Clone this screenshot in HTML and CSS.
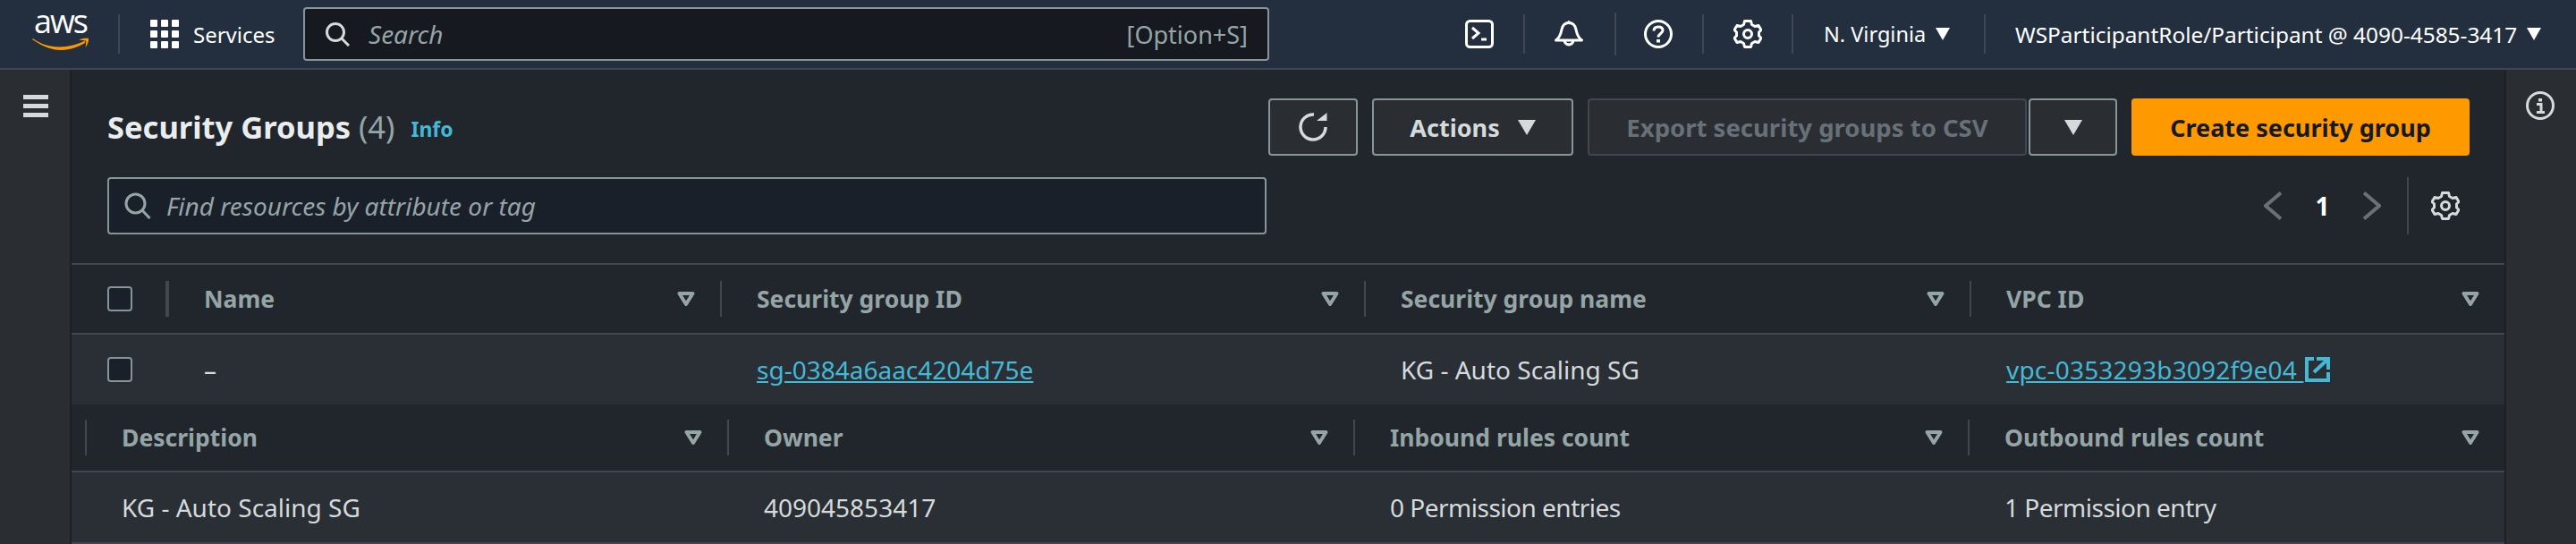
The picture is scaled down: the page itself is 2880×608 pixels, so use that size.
FILE: index.html
```html
<!DOCTYPE html>
<html lang="en">
<head>
<meta charset="UTF-8" />
<title>Security Groups</title>
<link rel="stylesheet" href="styles.css">
</head>
<body>
    <svg class="defs">
        <symbol id="icon-gear" viewBox="0 0 32 32"><path d="M12.5 1.5 H19.5 L20.5 5.5 L24 7.5 L28 6.5 L31 11.5 L28.5 14 V18 L31 20.5 L28 25.5 L24 24.5 L20.5 26.5 L19.5 30.5 H12.5 L11.5 26.5 L8 24.5 L4 25.5 L1 20.5 L3.5 18 V14 L1 11.5 L4 6.5 L8 7.5 L11.5 5.5 Z" fill="none" stroke-width="3" stroke-linejoin="round"/><circle cx="16" cy="16" r="4.5" fill="none" stroke-width="3"/></symbol>
        <symbol id="icon-sort" viewBox="0 0 20 16"><path d="M2.5 2 H17.5 L10 14 Z" fill="none" stroke="#95a5a6" stroke-width="4" stroke-linejoin="round"/></symbol>
    </svg>

    <header class="topnav">
        <div class="logo">
            <span class="logo-word">aws</span>
            <svg class="logo-smile" viewBox="0 0 65 16" width="65" height="16" fill="#f90"><path d="M1 2 C 14 11, 25 14, 33 14 C 44 14, 53 10, 60 6 L 60 3.500 C 52 7.500, 42 10.500, 31 10.500 C 20 10.500, 10 7, 2 1 Z"/><path d="M53 2.500 C 57 0.500, 62 0.500, 64 1 C 64.500 3, 63 8, 60.500 11 C 61 8, 61.500 5, 61 3.500 C 59 3, 56 3, 53 2.500 Z"/></svg>
        </div>
        <span class="nav-sep nav-sep-logo"></span>
        <div class="services">
            <svg class="grid-icon" viewBox="0 0 32 32" width="32" height="32" fill="#fff"><rect x="0" y="0" width="8" height="8" rx="1"/><rect x="12" y="0" width="8" height="8" rx="1"/><rect x="24" y="0" width="8" height="8" rx="1"/><rect x="0" y="12" width="8" height="8" rx="1"/><rect x="12" y="12" width="8" height="8" rx="1"/><rect x="24" y="12" width="8" height="8" rx="1"/><rect x="0" y="24" width="8" height="8" rx="1"/><rect x="12" y="24" width="8" height="8" rx="1"/><rect x="24" y="24" width="8" height="8" rx="1"/></svg>
            <span>Services</span>
        </div>
        <div class="nav-search">
            <svg class="search-icon" viewBox="0 0 28 28" width="28" height="28" fill="none" stroke="#d5dbdb" stroke-width="3"><circle cx="12" cy="12" r="9.5"/><path d="M19 19 L27 27"/></svg>
            <span class="nav-search-text">Search</span>
            <span class="nav-search-key">[Option+S]</span>
        </div>
        <div class="nav-icon nav-icon-first">
            <svg viewBox="0 0 32 32" width="32" height="32" fill="none" stroke="#fff" stroke-width="3"><rect x="1.5" y="1.5" width="29" height="29" rx="4"/><path d="M8 9 L15 15 L8 21"/><path d="M18 22 H24"/></svg>
        </div>
        <span class="nav-sep"></span>
        <div class="nav-icon">
            <svg viewBox="0 0 32 32" width="32" height="32" fill="none" stroke="#fff" stroke-width="3"><path d="M1.5 23 C 6 20, 7 16, 8 11 C 9 6, 12 3.5, 16 3.5 C 20 3.5, 23 6, 24 11 C 25 16, 26 20, 30.5 23 Z" stroke-linejoin="round"/><circle cx="16" cy="2.5" r="1.5" fill="#fff" stroke="none"/><path d="M11 23 A5 5 0 0 0 21 23 M11 24 A5.5 6.5 0 0 0 21 24"/></svg>
        </div>
        <span class="nav-sep nav-sep-tall"></span>
        <div class="nav-icon">
            <svg viewBox="0 0 32 32" width="32" height="32" fill="none" stroke="#fff" stroke-width="3"><circle cx="16" cy="16" r="14.5"/><path d="M11 12.5 C 11 9.5, 13 8, 16 8 C 19 8, 21 9.5, 21 12 C 21 15.5, 16 15.5, 16 19.5"/><rect x="14" y="22" width="4" height="3.5" fill="#fff" stroke="none"/></svg>
        </div>
        <span class="nav-sep"></span>
        <div class="nav-icon">
            <svg width="32" height="32" stroke="#fff"><use href="#icon-gear"/></svg>
        </div>
        <span class="nav-sep"></span>
        <div class="nav-menu nav-menu-region"><span>N. Virginia</span><i class="tri tri-nav"></i></div>
        <span class="nav-sep"></span>
        <div class="nav-menu nav-menu-user"><span>WSParticipantRole/Participant @ 4090-4585-3417</span><i class="tri tri-nav"></i></div>
    </header>

    <div class="layout">
        <aside class="side side-left">
            <div class="burger"><span></span><span></span><span></span></div>
        </aside>

        <main class="main">
            <section class="panel-head">
                <div class="head-row">
                    <h1>Security Groups <span class="count">(4)</span></h1>
                    <a class="info">Info</a>
                    <div class="actions">
                        <button class="btn btn-icon">
                            <svg viewBox="0 0 32 32" width="32" height="32" fill="none" stroke="#d5dbdb" stroke-width="3.5"><path d="M17 2 A14 14 0 1 0 30 16"/><path d="M20 9 H31.500 V0 Z" fill="#d5dbdb" stroke="none"/></svg>
                        </button>
                        <button class="btn btn-actions">Actions<i class="tri tri-btn"></i></button>
                        <button class="btn btn-export" disabled>Export security groups to CSV</button>
                        <button class="btn btn-split"><i class="tri tri-btn"></i></button>
                        <button class="btn btn-create">Create security group</button>
                    </div>
                </div>
                <div class="filter-row">
                    <div class="filter">
                        <svg viewBox="0 0 30 30" width="30" height="30" fill="none" stroke="#95a5a6" stroke-width="3"><circle cx="12.5" cy="12.5" r="10.5"/><path d="M20 20 L28.5 29"/></svg>
                        <span>Find resources by attribute or tag</span>
                    </div>
                    <div class="pager">
                        <svg viewBox="0 0 20 32" width="20" height="32" fill="none" stroke="#687078" stroke-width="4"><path d="M19 1.500 L2 16 L19 30.500"/></svg>
                        <span class="page-num">1</span>
                        <svg viewBox="0 0 20 32" width="20" height="32" fill="none" stroke="#687078" stroke-width="4"><path d="M1 1.500 L18 16 L1 30.500"/></svg>
                        <span class="pager-sep"></span>
                        <svg width="32" height="32" stroke="#d5dbdb"><use href="#icon-gear"/></svg>
                    </div>
                </div>
            </section>

            <section class="table">
                <div class="row row-head cols-a">
                    <div class="cell-check"><span class="checkbox"></span></div>
                    <div class="cell"><b>Name</b><svg class="sort"><use href="#icon-sort"/></svg></div>
                    <div class="cell"><b>Security group ID</b><svg class="sort"><use href="#icon-sort"/></svg></div>
                    <div class="cell"><b>Security group name</b><svg class="sort"><use href="#icon-sort"/></svg></div>
                    <div class="cell"><b>VPC ID</b><svg class="sort"><use href="#icon-sort"/></svg></div>
                </div>
                <div class="row row-data row-first cols-a">
                    <div class="cell-check"><span class="checkbox"></span></div>
                    <div class="cell">–</div>
                    <div class="cell"><a class="link">sg-0384a6aac4204d75e</a></div>
                    <div class="cell">KG - Auto Scaling SG</div>
                    <div class="cell">
                        <a class="link link-ext">vpc-0353293b3092f9e04&nbsp;</a>
                        <svg class="ext" viewBox="0 0 28 28" width="28" height="28" fill="none" stroke="#44b9d6" stroke-width="4"><path d="M10 2 H2 V26 H26 V17"/><path d="M13 2 H26 V14 M25 3 L10 17"/></svg>
                    </div>
                </div>
                <div class="row row-head row-head-second cols-b">
                    <div class="cell"><b>Description</b><svg class="sort"><use href="#icon-sort"/></svg></div>
                    <div class="cell"><b>Owner</b><svg class="sort"><use href="#icon-sort"/></svg></div>
                    <div class="cell"><b>Inbound rules count</b><svg class="sort"><use href="#icon-sort"/></svg></div>
                    <div class="cell"><b>Outbound rules count</b><svg class="sort"><use href="#icon-sort"/></svg></div>
                </div>
                <div class="row row-data cols-b">
                    <div class="cell">KG - Auto Scaling SG</div>
                    <div class="cell">409045853417</div>
                    <div class="cell cell-tight">0 Permission entries</div>
                    <div class="cell cell-tight">1 Permission entry</div>
                </div>
            </section>
        </main>

        <aside class="side side-right">
            <svg viewBox="0 0 32 32" width="32" height="32" fill="none" stroke="#d5dbdb" stroke-width="3"><circle cx="16" cy="16" r="14.500"/><rect x="14" y="8" width="4" height="3.500" fill="#d5dbdb" stroke="none"/><path d="M12 14.500 H17 V23 M12 23.500 H21" stroke-width="3"/></svg>
        </aside>
    </div>
</body>
</html>
```

FILE: styles.css
```css
* {
    margin:0px;
    padding:0px;
    box-sizing:border-box;
}

html, body {
    height:608px;
    overflow:hidden;
}

body {
    font-family:"Noto Sans", "Open Sans", sans-serif;
    font-size:28px;
    color:#d5dbdb;
    background-color:#21252c;
}

.defs {
    display:none;
}

/* top bar */
.topnav {
    display:flex;
    align-items:center;
    height:78px;
    border-bottom:2px solid #414750;
    color:#fff;
    background-color:#232f3e;
}

.logo {
    display:flex;
    flex-direction:column;
    align-items:center;
    width:65px;
    height:39px;
    margin-left:35px;
}

.logo-word {
    height:23px;
    font-family:"Open Sans", sans-serif;
    font-size:36px;
    line-height:10px;
    letter-spacing:-2px;
}

.nav-sep {
    flex:none;
    width:2px;
    height:44px;
    background-color:#414750;
}

.nav-sep-tall {
    height:48px;
    margin:0px -2px 0px 2px;
}

.nav-sep-logo {
    margin-left:32px;
}

.services {
    display:flex;
    flex:none;
    align-items:center;
    gap:16px;
    width:171px;
    margin-left:34px;
    font-size:24px;
}

.nav-search {
    display:flex;
    flex:none;
    align-items:center;
    width:1080px;
    height:60px;
    padding:0px 22px;
    border:2px solid #879596;
    border-radius:4px;
    background-color:#16191f;
}

.nav-search-text {
    margin-left:21px;
    font-style:italic;
    color:#95a5a6;
}

.nav-search-key {
    margin-left:auto;
    font-size:27px;
    color:#95a5a6;
}

.nav-icon {
    display:flex;
    flex:none;
    margin:0px 33px;
}

.nav-icon-first {
    margin-left:219px;
}

.nav-menu {
    display:flex;
    flex:none;
    align-items:center;
    gap:11px;
}

.nav-menu-region {
    width:213px;
    padding-left:34px;
    font-size:23.5px;
}

.nav-menu-user {
    padding-left:33px;
    font-size:24.4px;
}

.tri {
    display:inline-block;
    width:0px;
    height:0px;
    border-style:solid;
    border-color:transparent;
}

.tri-nav {
    border-width:14px 8px 0px 8px;
    border-top-color:#fff;
}

.tri-btn {
    border-width:17px 10px 0px 10px;
    border-top-color:#d5dbdb;
}

/* page frame */
.layout {
    display:flex;
    height:530px;
}

.side {
    flex:none;
    width:80px;
    background-color:#2a2e33;
}

.side-left {
    border-right:2px solid #1d2026;
    padding:28px 0px 0px 26px;
}

.side-right {
    border-left:2px solid #1d2026;
    padding:24px 0px 0px 22px;
}

.side-right svg {
    display:block;
}

.burger {
    display:flex;
    flex-direction:column;
    gap:5px;
    width:28px;
}

.burger span {
    height:5px;
    background-color:#d5dbdb;
}

.main {
    flex:1;
    min-width:0;
}

/* heading and actions */
.panel-head {
    height:218px;
    padding:32px 0px 0px 40px;
    border-bottom:2px solid #414750;
}

.head-row {
    display:flex;
    align-items:center;
    height:64px;
}

h1 {
    font-size:34.5px;
    font-weight:700;
    color:#eaeded;
    line-height:44px;
}

.count {
    font-weight:400;
    color:#95a5a6;
}

.info {
    margin-left:18px;
    margin-top:4px;
    font-size:23px;
    font-weight:700;
    color:#44b9d6;
}

.actions {
    display:flex;
    gap:16px;
    margin-left:auto;
    padding-right:39px;
}

.btn {
    display:flex;
    align-items:center;
    justify-content:center;
    height:64px;
    border:2px solid #879596;
    border-radius:4px;
    font-family:inherit;
    font-size:27px;
    font-weight:700;
    color:#d5dbdb;
    background-color:#2a2e33;
}

.btn-icon {
    width:100px;
}

.btn-actions {
    gap:20px;
    width:225px;
}

.btn-export {
    width:491px;
    margin-right:-14px;
    border-color:#414750;
    font-size:27.5px;
    color:#687078;
}

.btn-split {
    width:99px;
}

.btn-create {
    width:378px;
    border-color:#f90;
    color:#16191f;
    background-color:#f90;
}

.filter-row {
    display:flex;
    align-items:center;
    height:64px;
    margin-top:24px;
}

.filter {
    display:flex;
    align-items:center;
    gap:17px;
    width:1296px;
    height:64px;
    padding-left:17px;
    border:2px solid #879596;
    border-radius:4px;
    font-style:italic;
    color:#95a5a6;
    background-color:#1a2029;
}

.pager {
    display:flex;
    align-items:center;
    height:64px;
    margin-left:auto;
    padding-right:50px;
}

.page-num {
    width:91px;
    text-align:center;
    font-weight:700;
    color:#fff;
}

.pager-sep {
    width:2px;
    height:64px;
    margin:0px 25px 0px 29px;
    background-color:#414750;
}

/* table */
.row {
    display:grid;
    align-items:center;
}

.cols-a {
    grid-template-columns:107px 618px 720px 677px 598px;
}

.cols-b {
    grid-template-columns:15px 718px 700px 687px 600px;
}

.cols-b .cell:first-child {
    grid-column:2;
}

.row-head {
    height:78px;
    border-bottom:2px solid #414750;
}

.row-head-second {
    height:76px;
}

.row-data {
    height:80px;
    border-bottom:2px solid #414750;
    background-color:#2a2e35;
}

.row-first {
    height:78px;
    border-bottom:0px;
}

.cell-check {
    display:flex;
    align-items:center;
    height:40px;
    padding-left:40px;
}

.cell-check:first-child {
    border-right:2px solid #414750;
}

.checkbox {
    width:28px;
    height:28px;
    border:2px solid #879596;
    border-radius:4px;
    background-color:#1a2029;
}

.cell {
    display:flex;
    align-items:center;
    height:40px;
    padding:0px 28px 0px 41px;
    white-space:nowrap;
}

.cell-tight {
    letter-spacing:-0.5px;
}

.row-first .cell-check {
    border-right-color:transparent;
}

.row-head .cell {
    border-left:2px solid #414750;
    padding-left:39px;
    font-size:26.5px;
}

.row-head b {
    color:#95a5a6;
}

.sort {
    flex:none;
    width:20px;
    height:16px;
    margin-left:auto;
}

.link {
    color:#44b9d6;
    text-decoration:underline;
}

.link-ext {
    letter-spacing:0.2px;
}

.ext {
    flex:none;
    margin-left:2px;
}
```
